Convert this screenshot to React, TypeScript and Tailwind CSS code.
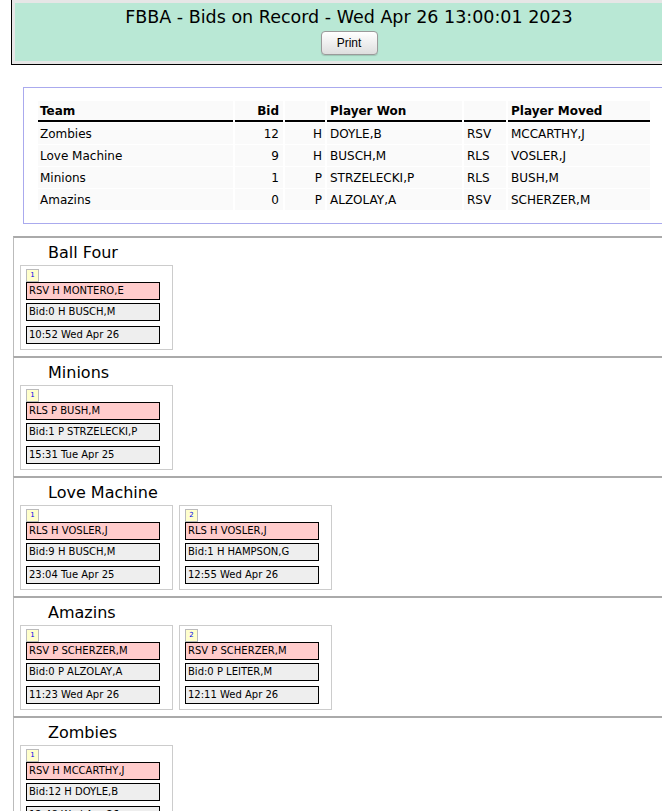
import React from "react";

type Move = { seq: number; action: string; bid: string; time: string };
type Section = { team: string; moves: Move[] };

const bids = [
  { team: "Zombies", bid: 12, pos: "H", won: "DOYLE,B", act: "RSV", moved: "MCCARTHY,J" },
  { team: "Love Machine", bid: 9, pos: "H", won: "BUSCH,M", act: "RLS", moved: "VOSLER,J" },
  { team: "Minions", bid: 1, pos: "P", won: "STRZELECKI,P", act: "RLS", moved: "BUSH,M" },
  { team: "Amazins", bid: 0, pos: "P", won: "ALZOLAY,A", act: "RSV", moved: "SCHERZER,M" },
];

const sections: Section[] = [
  { team: "Ball Four", moves: [{ seq: 1, action: "RSV H MONTERO,E", bid: "Bid:0 H BUSCH,M", time: "10:52 Wed Apr 26" }] },
  { team: "Minions", moves: [{ seq: 1, action: "RLS P BUSH,M", bid: "Bid:1 P STRZELECKI,P", time: "15:31 Tue Apr 25" }] },
  {
    team: "Love Machine",
    moves: [
      { seq: 1, action: "RLS H VOSLER,J", bid: "Bid:9 H BUSCH,M", time: "23:04 Tue Apr 25" },
      { seq: 2, action: "RLS H VOSLER,J", bid: "Bid:1 H HAMPSON,G", time: "12:55 Wed Apr 26" },
    ],
  },
  {
    team: "Amazins",
    moves: [
      { seq: 1, action: "RSV P SCHERZER,M", bid: "Bid:0 P ALZOLAY,A", time: "11:23 Wed Apr 26" },
      { seq: 2, action: "RSV P SCHERZER,M", bid: "Bid:0 P LEITER,M", time: "12:11 Wed Apr 26" },
    ],
  },
  { team: "Zombies", moves: [{ seq: 1, action: "RSV H MCCARTHY,J", bid: "Bid:12 H DOYLE,B", time: "12:48 Wed Apr 26" }] },
];

const MoveCard = ({ m }: { m: Move }) => (
  <div className="w-[153px] border border-[#cccccc] pt-[3px] pb-[5px] pl-[5px] bg-white">
    <div className="w-[13px] h-[13px] border border-[#bbbbbb] bg-[#ffffcc] text-[7px] leading-[11px] text-center text-[#0000ee]">
      {m.seq}
    </div>
    {/* action / bid / time boxes */}
    <div className="w-[134px] h-[18px] border border-black bg-[#ffcccc] pl-[2px] text-[10px] leading-[16px] whitespace-nowrap">
      {m.action}
    </div>
    <div className="w-[134px] h-[18px] mt-[3px] border border-black bg-[#eeeeee] pl-[2px] text-[10px] leading-[16px] whitespace-nowrap">
      {m.bid}
    </div>
    <div className="w-[134px] h-[18px] mt-[5px] border border-black bg-[#eeeeee] pl-[2px] text-[10px] leading-[16px] whitespace-nowrap">
      {m.time}
    </div>
  </div>
);

export default function App() {
  return (
    <div className="w-screen min-h-screen overflow-hidden bg-white text-black font-['DejaVu_Sans',Verdana,sans-serif]">
      <div className="w-[1000px]">
        {/* Header */}
        <div className="ml-[11px] w-[675px] border-l border-b border-black bg-[#e6e6e6] p-[3px]">
          <div className="bg-[#b9e8d5] pt-[4px] pb-[6px] flex flex-col items-center">
            <div className="text-[17.5px] leading-[20px] whitespace-nowrap">FBBA - Bids on Record - Wed Apr 26 13:00:01 2023</div>
            <button className="mt-[4px] w-[57px] h-[24px] rounded-[4px] border border-[#9a9a9a] bg-gradient-to-b from-white to-[#dedede] text-[12px] font-['Liberation_Sans',Arial,sans-serif] shadow-[0_1px_1px_rgba(0,0,0,0.15)]">
              Print
            </button>
          </div>
        </div>

        {/* Summary table */}
        <div className="ml-[23px] mt-[22px] w-[700px] border-l border-t border-b border-[#aaaaee] pt-[12px] pb-[12px] pl-[12px]">
          <table className="table-fixed border-separate border-spacing-x-[2px] border-spacing-y-[1px] text-[12px]">
            <thead>
              <tr className="font-bold text-left">
                <th className="w-[195px] h-[21px] px-[2px] bg-[#fafafa] border-b-2 border-black text-left">Team</th>
                <th className="w-[48px] px-[4px] bg-[#fafafa] border-b-2 border-black text-right">Bid</th>
                <th className="w-[40px] bg-[#fafafa] border-b-2 border-black"></th>
                <th className="w-[135px] px-[3px] bg-[#fafafa] border-b-2 border-black text-left">Player Won</th>
                <th className="w-[42px] bg-[#fafafa] border-b-2 border-black"></th>
                <th className="w-[142px] px-[3px] bg-[#fafafa] border-b-2 border-black text-left">Player Moved</th>
              </tr>
            </thead>
            <tbody>
              {bids.map((b) => (
                <tr key={b.team}>
                  <td className="h-[21px] px-[2px] bg-[#fafafa]">{b.team}</td>
                  <td className="px-[4px] bg-[#fafafa] text-right">{b.bid}</td>
                  <td className="px-[3px] bg-[#fafafa] text-right">{b.pos}</td>
                  <td className="px-[3px] bg-[#fafafa]">{b.won}</td>
                  <td className="px-[3px] bg-[#fafafa]">{b.act}</td>
                  <td className="px-[3px] bg-[#fafafa]">{b.moved}</td>
                </tr>
              ))}
            </tbody>
          </table>
        </div>

        {/* Team sections */}
        <div className="mt-[12px]">
          {sections.map((s) => (
            <div key={s.team} className="ml-[13px] border-l border-l-[#bbbbbb] border-t-2 border-t-[#aaaaaa] pt-[3px] pb-[6px]">
              <div className="pl-[34px] h-[24px] text-[16px] leading-[24px]">{s.team}</div>
              <div className="pl-[6px] flex gap-[6px]">
                {s.moves.map((m) => (
                  <MoveCard key={m.seq} m={m} />
                ))}
              </div>
            </div>
          ))}
        </div>
      </div>
    </div>
  );
}
